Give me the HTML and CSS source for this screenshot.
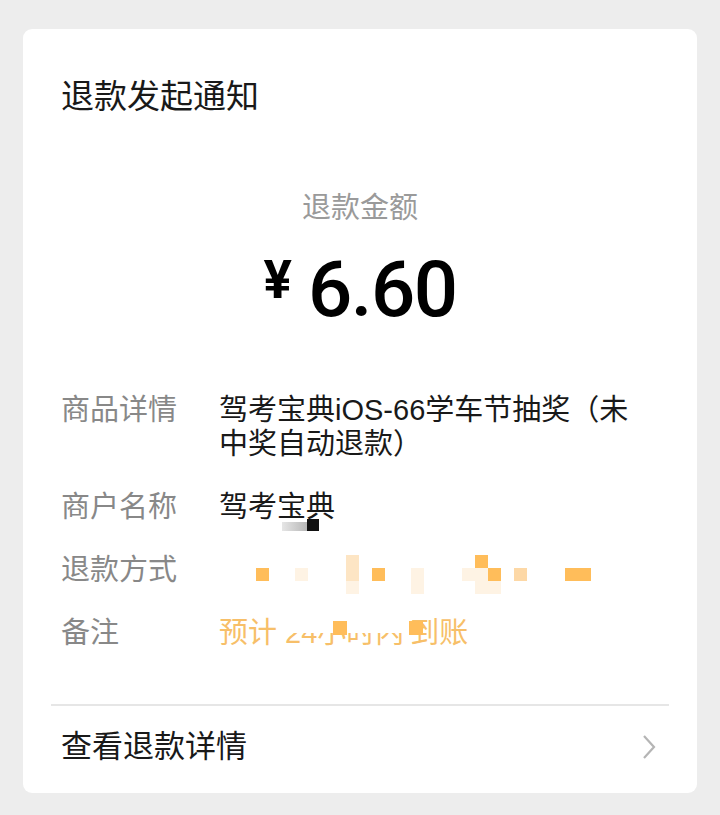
FILE: index.html
```html
<!DOCTYPE html>
<html lang="zh-CN">
<head>
    <meta charset="UTF-8">
    <meta name="viewport" content="width=device-width, initial-scale=1.0">
    <title>退款发起通知</title>
    <link rel="stylesheet" href="styles.css">
</head>
<body>

<div class="card">
    <div class="head">
        <h1 class="title">退款发起通知</h1>
    </div>

    <div class="summary">
        <div class="summary-label">退款金额</div>
        <div class="amount">
            <span class="currency">¥</span>
            <span class="amount-value">6.60</span>
        </div>
    </div>

    <dl class="details">
        <div class="row">
            <dt>商品详情</dt>
            <dd class="wrap">驾考宝典iOS-66学车节抽奖（未中奖自动退款）</dd>
        </div>
        <div class="row">
            <dt>商户名称</dt>
            <dd>驾考宝典<span class="mask-bar"></span><span class="mask-dot"></span></dd>
        </div>
        <div class="row">
            <dt>退款方式</dt>
            <dd class="fixed">
                <!-- 打码区域 -->
                <div class="mosaic">
                    <span class="orange"></span>
                    <span class="faint"></span>
                    <span class="pale"></span>
                    <span class="pale"></span>
                    <span class="faint"></span>
                    <span class="orange"></span>
                    <span class="faint"></span>
                    <span class="faint"></span>
                    <span class="faint"></span>
                    <span class="orange"></span>
                    <span class="faint"></span>
                    <span class="faint"></span>
                    <span class="orange"></span>
                    <span class="faint"></span>
                    <span class="light"></span>
                    <span class="orange"></span>
                </div>
            </dd>
        </div>
        <div class="row">
            <dt>备注</dt>
            <dd class="note">预计<span class="smudge">24小时内</span>到账<span class="blot blot-a"></span><span class="blot blot-b"></span></dd>
        </div>
    </dl>

    <a class="more" href="#">
        <span>查看退款详情</span>
        <svg class="chevron" width="14" height="26" viewBox="0 0 14 26">
            <polyline points="2,2 12,13 2,24" fill="none" stroke="#b5b5b5" stroke-width="2.2"/>
        </svg>
    </a>
</div>

</body>
</html>
```

FILE: styles.css
```css
body {
    margin: 0;
    padding: 29px 23px 22px;
    background-color: #ededed;
    font-family: "Liberation Sans", "Noto Sans CJK SC", sans-serif;
    color: #191919;
}
.card {
    background-color: #fff;
    border-radius: 9px;
    padding: 0 38px;
}
.head {
    padding-top: 48px;
}
.title {
    margin: 0;
    font-size: 33px;
    font-weight: 400;
    line-height: 40px;
}
.summary {
    margin-top: 71px;
    text-align: center;
}
.summary-label {
    font-size: 29px;
    line-height: 40px;
    color: #9a9a9a;
}
.amount {
    margin-top: 22px;
    height: 80px;
    display: flex;
    justify-content: center;
    align-items: flex-start;
    font-family: Roboto, sans-serif;
    color: #000;
}
.currency {
    font-size: 53px;
    font-weight: 700;
    line-height: 52px;
    margin-top: 4px;
    margin-right: 16px;
}
.amount-value {
    font-size: 78px;
    font-weight: 500;
    line-height: 80px;
    letter-spacing: -1.5px;
}
.details {
    margin: 63px 0 0;
    display: flex;
    flex-direction: column;
    gap: 29px;
}
.row {
    display: flex;
    font-size: 29px;
    line-height: 34px;
}
.row dt {
    width: 158px;
    flex: none;
    color: #888;
}
.row dd {
    margin: 0;
    position: relative;
}
.row .wrap {
    max-width: 420px;
}
.row .fixed {
    height: 34px;
}
.mask-bar {
    position: absolute;
    left: 63px;
    top: 32px;
    width: 25px;
    height: 9px;
    background: linear-gradient(90deg, #e6e6e6, #b7b7b7);
}
.mask-dot {
    position: absolute;
    left: 88px;
    top: 29px;
    width: 12px;
    height: 12px;
    background-color: #111;
}

/* mosaic */
.mosaic {
    display: grid;
    grid-template-columns: repeat(26, 12.9px);
    grid-template-rows: repeat(3, 13px);
    margin: 2px 0 0 37px;
}
.mosaic .orange { background-color: #ffbd5a; }
.mosaic .light { background-color: #fdd8a6; }
.mosaic .pale { background-color: #fde5c4; }
.mosaic .faint { background-color: #fef3e4; }
.mosaic span:nth-child(1) { grid-area: 2 / 1; }
.mosaic span:nth-child(2) { grid-area: 2 / 4; }
.mosaic span:nth-child(3) { grid-area: 1 / 8; }
.mosaic span:nth-child(4) { grid-area: 2 / 8; }
.mosaic span:nth-child(5) { grid-area: 3 / 8; }
.mosaic span:nth-child(6) { grid-area: 2 / 10; }
.mosaic span:nth-child(7) { grid-area: 2 / 13; }
.mosaic span:nth-child(8) { grid-area: 3 / 13; }
.mosaic span:nth-child(9) { grid-area: 2 / 17; }
.mosaic span:nth-child(10) { grid-area: 1 / 18; }
.mosaic span:nth-child(11) { grid-area: 2 / 18; }
.mosaic span:nth-child(12) { grid-area: 3 / 18; }
.mosaic span:nth-child(13) { grid-area: 2 / 19; }
.mosaic span:nth-child(14) { grid-area: 3 / 19; }
.mosaic span:nth-child(15) { grid-area: 2 / 21; }
.mosaic span:nth-child(16) { grid-area: 2 / 25 / 3 / 27; }

.note {
    color: #f7bf69;
}
.smudge {
    display: inline-block;
    margin: 0 6px 0 8px;
    clip-path: inset(50% 0 0 0);
}
.blot {
    position: absolute;
    top: 5px;
    width: 14px;
    height: 14px;
    background-color: #ffbd5a;
}
.blot-a { left: 114px; }
.blot-b { left: 190px; }

.more {
    margin: 54px -10px 0;
    padding: 21px 13px 26px 10px;
    border-top: 2px solid #e6e6e6;
    display: flex;
    justify-content: space-between;
    align-items: center;
    font-size: 31px;
    line-height: 40px;
    color: #191919;
    text-decoration: none;
}
.chevron {
    display: block;
}
```
